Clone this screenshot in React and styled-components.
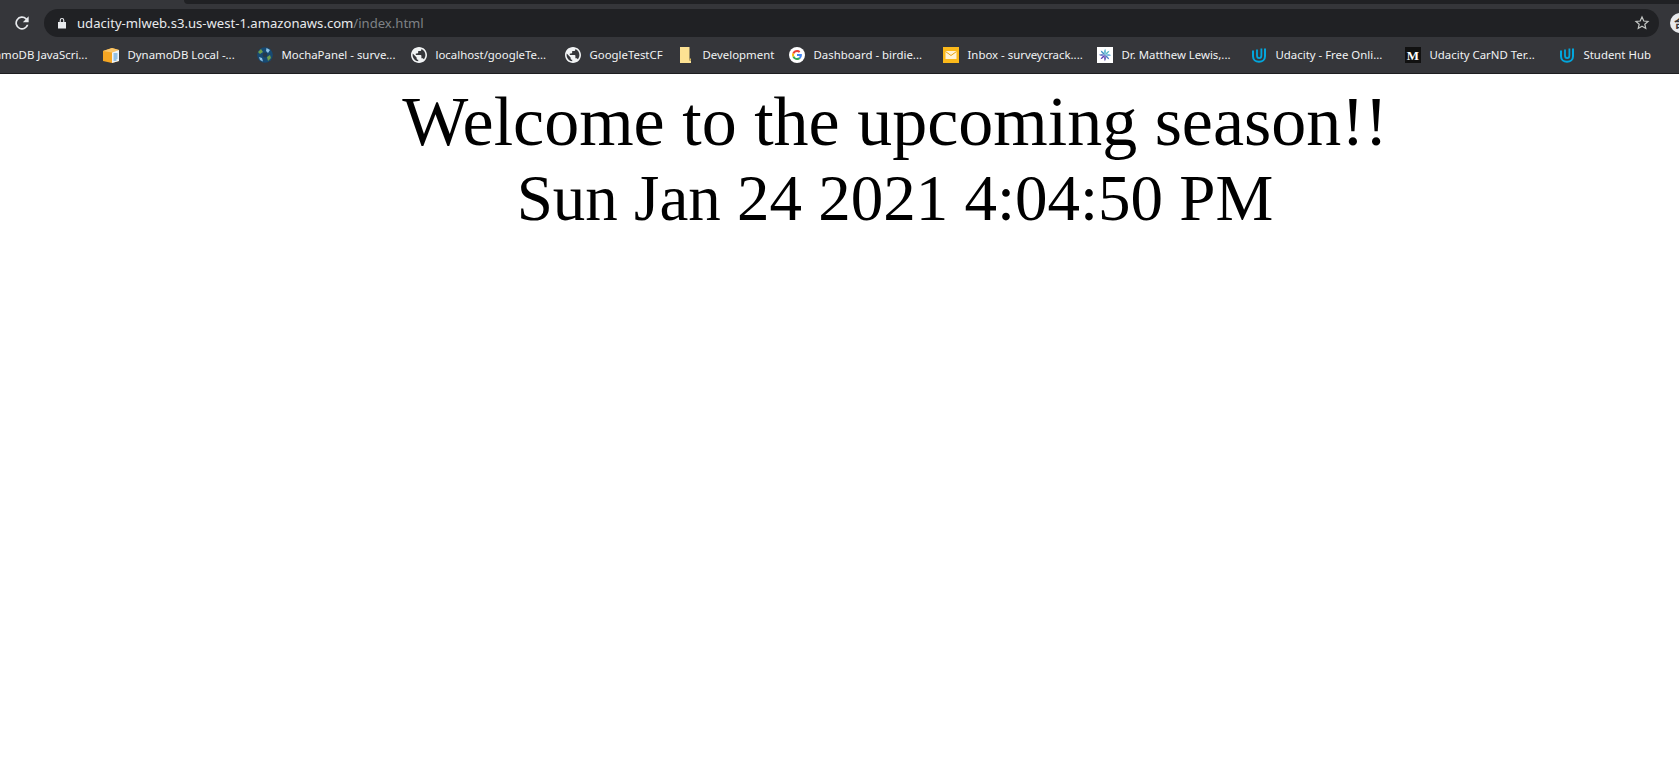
import React from "react";
import styled, { createGlobalStyle } from "styled-components";

const Global = createGlobalStyle`
  html, body { margin: 0; padding: 0; background: #fff; overflow: hidden; }
`;
const Chrome = styled.header`
  background: #35363a;
  width: 1679px;
  overflow: hidden;
  border-bottom: 1px solid #1d1e20;
`;
const TabStrip = styled.div`
  height: 9px;
  padding-left: 184px;
`;
const TabEdge = styled.div`
  height: 4px;
  background: #202124;
  border-bottom-left-radius: 6px;
`;
const Toolbar = styled.div`
  display: flex;
  align-items: center;
  height: 28px;
`;
const ReloadButton = styled.div`
  width: 44px;
  flex: none;
  display: flex;
  justify-content: center;
  padding-right: 1px;
  box-sizing: border-box;
  color: #e8eaed;
`;
const Omnibox = styled.div`
  width: 1615px;
  flex: none;
  height: 28px;
  border-radius: 14px;
  background: #202124;
  display: flex;
  align-items: center;
  padding: 0 9px 0 13px;
  box-sizing: border-box;
  font: 13.1px "Noto Sans", sans-serif;
  color: #e8eaed;
`;
const Host = styled.span`
  margin-left: 10px;
  flex: 1;
`;
const Path = styled.span`
  color: #7f8286;
`;
const Avatar = styled.div`
  width: 20px;
  height: 20px;
  margin-left: 11px;
  border-radius: 50%;
  background: #e8eaed;
  color: #35363a;
  font: 700 12px/20px "Noto Sans CJK SC", "Noto Sans", sans-serif;
  flex: none;
  overflow: hidden;
  padding-left: 4px;
  box-sizing: border-box;
`;
const Bookmarks = styled.nav`
  display: flex;
  align-items: center;
  height: 36px;
  margin-left: -51px;
`;
const Bookmark = styled.div`
  flex: none;
  width: ${(p) => p.$w || 154}px;
  display: flex;
  align-items: center;
  gap: 8.5px;
  font: 11.4px "Noto Sans", sans-serif;
  color: #f1f3f4;
  white-space: nowrap;
`;
const Label = styled.span`
  padding-bottom: 2px;
`;
const Ico = styled.svg`
  width: 16px;
  height: 16px;
  flex: none;
  display: block;
`;
const FolderIco = styled(Ico)`
  margin-left: 2px;
  margin-right: -1px;
`;
const Page = styled.main`
  padding: 10px 0 0 111px;
  text-align: center;
`;
const Heading = styled.div`
  font-family: "Liberation Serif", "Times New Roman", serif;
  font-size: ${(p) => p.$size}px;
  line-height: 76px;
  color: #000;
`;

const Globe = () => (
  <Ico viewBox="2 2 20 20">
    <circle cx="12" cy="12" r="9" fill="#35363a" />
    <path
      fill="#f1f3f4"
      d="M12 2C6.480 2 2 6.480 2 12s4.480 10 10 10 10-4.480 10-10S17.520 2 12 2zm-1 17.930c-3.950-.490-7-3.850-7-7.930 0-.620.080-1.210.210-1.790L9 15v1c0 1.100.9 2 2 2v1.930zm6.900-2.540c-.260-.810-1-1.390-1.900-1.390h-1v-3c0-.550-.450-1-1-1H8v-2h2c.550 0 1-.450 1-1V7h2c1.100 0 2-.9 2-2v-.410c2.930 1.190 5 4.060 5 7.410 0 2.080-.8 3.970-2.100 5.390z"
    />
  </Ico>
);
const UdacityIcon = () => (
  <Ico viewBox="0 0 16 16">
    <path d="M2 3.500v5.700c0 3.300 2.600 5.500 6 5.500s6-2.200 6-5.500V1.500" fill="none" stroke="#02a6dc" strokeWidth="2" />
    <path d="M6 2.500v6c0 1.600.9 2.600 2.200 2.600 1.300 0 2.200-1 2.200-2.600V1.500" fill="none" stroke="#02a6dc" strokeWidth="1.800" />
  </Ico>
);
const Box = () => (
  <Ico viewBox="0 0 16 16">
    <path d="M0 4l9-3 7 2v11l-7 2-9-2z" fill="#f5a623" />
    <path d="M0 4l9-3 7 2-7 2.600z" fill="#f9c56a" />
    <path d="M9 5.600l7-2.600v11l-7 2z" fill="#eef4fa" />
    <path d="M10.500 7h4M10.500 9h4M10.500 11h4M10.500 13h3" stroke="#3a8ccc" strokeWidth="1" />
  </Ico>
);
const Mocha = () => (
  <Ico viewBox="0 0 16 16">
    <circle cx="8" cy="8" r="7.800" fill="#174a73" />
    <path d="M1 5l3-3 2 3-3 2zM11 14l3-3-1-3-3 2z" fill="#6f9e4a" />
    <path d="M9.500 1l3.500 2-2 3-2-2zM2 10l3 1 1 3.500-3-1.500z" fill="#8fc3e6" />
    <circle cx="8" cy="8" r="2.400" fill="#263a4c" />
  </Ico>
);
const Folder = () => (
  <FolderIco viewBox="0 0 16 16">
    <path d="M1 0h9.500v13.500h1.500v2.500H1z" fill="#fde293" />
    <path d="M10.500 11.500h1.500v2h-1.500z" fill="#d9b95f" />
  </FolderIco>
);
const GoogleIcon = () => (
  <Ico viewBox="0 0 16 16">
    <circle cx="8" cy="8" r="8" fill="#fff" />
    <path d="M12.900 8.100c0-.4 0-.7-.1-1H8v1.900h2.800c-.1.600-.5 1.200-1 1.500l1.600 1.200c.9-.9 1.500-2.100 1.500-3.600z" fill="#4285f4" />
    <path d="M8 13c1.300 0 2.500-.4 3.400-1.300l-1.600-1.200c-.5.300-1 .5-1.800.5-1.300 0-2.400-.9-2.800-2.100L3.500 10.100C4.300 11.800 6 13 8 13z" fill="#34a853" />
    <path d="M5.200 8.900a3 3 0 0 1 0-1.900L3.500 5.800a5 5 0 0 0 0 4.300z" fill="#fbbc05" />
    <path d="M8 5c.8 0 1.400.3 1.900.8l1.400-1.400C10.500 3.500 9.300 3 8 3 6 3 4.300 4.100 3.500 5.800l1.700 1.200C5.600 5.800 6.700 5 8 5z" fill="#ea4335" />
  </Ico>
);
const Mail = () => (
  <Ico viewBox="0 0 16 16">
    <rect width="16" height="16" fill="#fbb91a" />
    <rect x="2.500" y="4" width="11" height="8" fill="#fff3d4" />
    <path d="M2.500 4.500L8 8.500l5.500-4" fill="none" stroke="#e9a510" strokeWidth="1" />
  </Ico>
);
const petals = [
  [0, "#3fa9c9"],
  [45, "#55b8c4"],
  [90, "#4aa0d0"],
  [135, "#4d7fc4"],
  [180, "#4a38a8"],
  [225, "#5d3ab0"],
  [270, "#3f58b8"],
  [315, "#3c8fc0"],
];
const Pinwheel = () => (
  <Ico viewBox="0 0 16 16">
    <rect width="16" height="16" fill="#fff" />
    {petals.map(([a, c]) => (
      <path key={a} d="M8 8C7 6 6.800 3.500 8.200 1.800 9 4 9 6 8 8z" fill={c} transform={`rotate(${a} 8 8)`} />
    ))}
  </Ico>
);
const Medium = () => (
  <Ico viewBox="0 0 16 16">
    <rect width="16" height="16" fill="#111" />
    <text x="8" y="12.500" textAnchor="middle" fill="#fff" fontFamily="Liberation Serif" fontWeight="700" fontSize="13">M</text>
  </Ico>
);

const items = [
  { icon: <Globe />, label: "DynamoDB JavaScri..." },
  { icon: <Box />, label: "DynamoDB Local -..." },
  { icon: <Mocha />, label: "MochaPanel - surve..." },
  { icon: <Globe />, label: "localhost/googleTe..." },
  { icon: <Globe />, label: "GoogleTestCF", w: 112 },
  { icon: <Folder />, label: "Development", w: 112 },
  { icon: <GoogleIcon />, label: "Dashboard - birdie..." },
  { icon: <Mail />, label: "Inbox - surveycrack...." },
  { icon: <Pinwheel />, label: "Dr. Matthew Lewis,..." },
  { icon: <UdacityIcon />, label: "Udacity - Free Onli..." },
  { icon: <Medium />, label: "Udacity CarND Ter..." },
  { icon: <UdacityIcon />, label: "Student Hub" },
];

export default function App() {
  return (
    <>
      <Global />
      <Chrome>
        <TabStrip>
          <TabEdge />
        </TabStrip>
        <Toolbar>
          <ReloadButton>
            <svg width="20" height="20" viewBox="0 0 24 24" fill="currentColor">
              <path d="M17.650 6.350A8 8 0 1 0 19.730 14h-2.080a6 6 0 1 1-1.410-6.240L13 11h7V4z" />
            </svg>
          </ReloadButton>
          <Omnibox>
            <svg width="10" height="12" viewBox="0 0 10 12" fill="#e8eaed">
              <path d="M1 5h8v6.500H1zM2.700 5V3.200a2.300 2.300 0 0 1 4.600 0V5H6.200V3.200a1.200 1.200 0 0 0-2.400 0V5z" />
            </svg>
            <Host>
              udacity-mlweb.s3.us-west-1.amazonaws.com<Path>/index.html</Path>
            </Host>
            <svg width="16" height="16" viewBox="0 0 24 24" fill="none" stroke="#c4c7c5" strokeWidth="1.800">
              <path d="M12 3l2.700 6 6.300.6-4.800 4.200 1.400 6.300L12 16.800 6.400 20.100l1.400-6.300L3 9.600 9.300 9z" />
            </svg>
          </Omnibox>
          <Avatar>合</Avatar>
        </Toolbar>
        <Bookmarks>
          {items.map((it) => (
            <Bookmark key={it.label} $w={it.w}>
              {it.icon}
              <Label>{it.label}</Label>
            </Bookmark>
          ))}
        </Bookmarks>
      </Chrome>
      <Page>
        <Heading $size={70}>Welcome to the upcoming season!!</Heading>
        <Heading $size={65}>Sun Jan 24 2021 4:04:50 PM</Heading>
      </Page>
    </>
  );
}
